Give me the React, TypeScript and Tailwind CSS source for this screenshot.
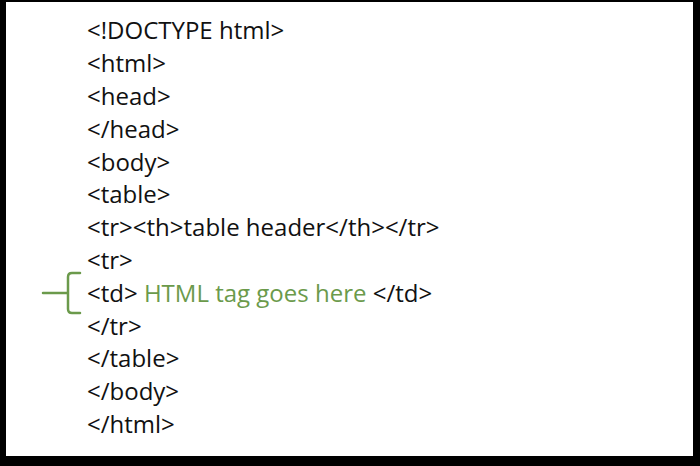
import React from "react";

const lines: { text: string; green?: string; after?: string; brace?: boolean }[] = [
  { text: "<!DOCTYPE html>" },
  { text: "<html>" },
  { text: "<head>" },
  { text: "</head>" },
  { text: "<body>" },
  { text: "<table>" },
  { text: "<tr><th>table header</th></tr>" },
  { text: "<tr>" },
  { text: "<td> ", green: "HTML tag goes here", after: " </td>", brace: true },
  { text: "</tr>" },
  { text: "</table>" },
  { text: "</body>" },
  { text: "</html>" },
];

export default function App() {
  return (
    <div className="w-[700px] h-[466px] bg-black pl-[6px] pt-[2px] pr-[7px] pb-[10px]">
      <div
        className="w-full h-full bg-white flex flex-col pt-[12px] text-[24px] text-[#111]"
        style={{ fontFamily: "'Open Sans', sans-serif" }}
      >
        {lines.map((l, i) => (
          <div key={i} className="flex items-center h-[32.8px]">
            <div className="w-[81px] shrink-0 h-full flex items-center">
              {l.brace && (
                <svg width="81" height="44" viewBox="0 0 81 44" fill="none" className="shrink-0">
                  <path
                    d="M37 22 H62 M74 2 H66 Q62 2 62 6 V38 Q62 42 66 42 H74"
                    stroke="#6b9a4b"
                    strokeWidth="2.5"
                    strokeLinecap="round"
                  />
                </svg>
              )}
            </div>
            <div className="whitespace-pre leading-none">
              {l.text}
              {l.green && <span className="text-[#6b9a4b]">{l.green}</span>}
              {l.after}
            </div>
          </div>
        ))}
      </div>
    </div>
  );
}
